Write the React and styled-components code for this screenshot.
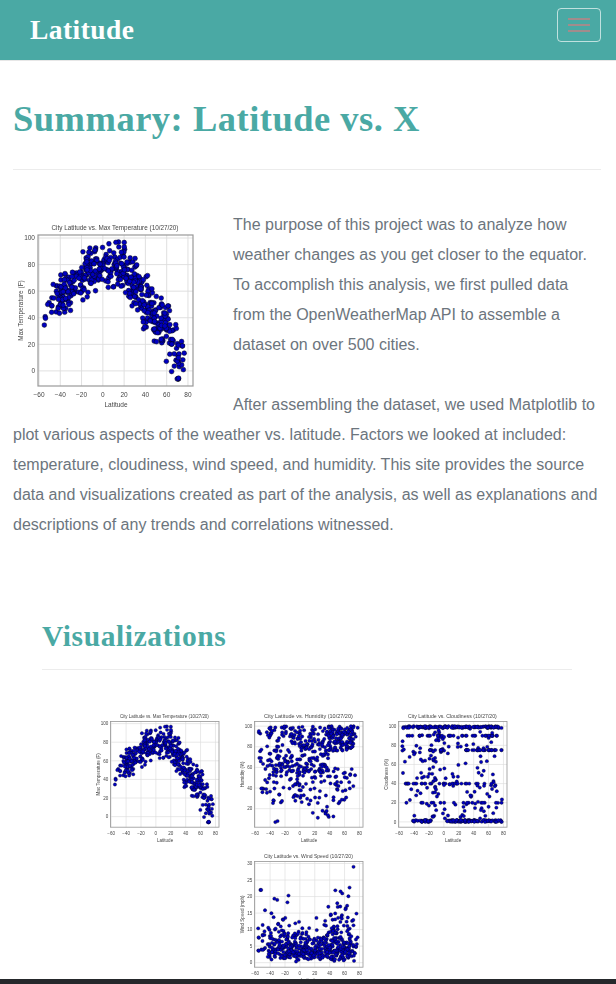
import React from 'react';
import styled, { createGlobalStyle } from 'styled-components';

const Global = createGlobalStyle`
  html, body { margin: 0; padding: 0; height: 984px; overflow: hidden; background: #fff; }
  body { font-family: "Liberation Sans", Arial, sans-serif; }
`;
const TEAL = '#4aa9a4';
const HEAD = '"Liberation Serif", Georgia, serif';

const Navbar = styled.header`
  height: 60px; background: ${TEAL}; border-bottom: 1px solid #e7e7e7;
  display: flex; align-items: flex-start; justify-content: space-between;
  padding: 0 15px 0 30px;
`;
const Brand = styled.a`
  font: bold 27.5px/60px ${HEAD}; color: #fff; letter-spacing: 0.45px;
`;
const Toggler = styled.button`
  width: 44px; height: 34px; margin-top: 8px; padding: 0; background: transparent;
  border: 1px solid rgba(255,255,255,.65); border-radius: 4px;
  display: flex; flex-direction: column; align-items: center; justify-content: center; gap: 4px;
`;
const Bar = styled.span`
  display: block; width: 22px; height: 2px; background: #a28c8c;
`;
const Main = styled.main`
  padding: 0 15px 0 13px;
`;
const Title = styled.h1`
  margin: 0; padding-top: 37px; height: 71px; color: ${TEAL};
  font: bold 36.5px/42px ${HEAD}; letter-spacing: 0.5px;
`;
const Rule = styled.hr`
  margin: 0; border: 0; border-top: 1px solid #ececec;
`;
const Summary = styled.section`
  margin-top: 40px; height: 400px;
`;
const FloatChart = styled.div`
  float: left; width: 200px; height: 200px; margin-right: 20px;
`;
const Body = styled.p`
  margin: 0; color: #6c757d; font-size: 16px; line-height: 30px;
`;
const Viz = styled.section`
  padding: 0 29px;
`;
const Heading = styled.h2`
  margin: 0; padding-top: 7px; height: 52px; color: ${TEAL};
  font: bold 29.5px/38px ${HEAD}; letter-spacing: 0.6px;
`;
const Gallery = styled.div`
  margin-top: 34px; display: flex; flex-wrap: wrap; justify-content: center; column-gap: 4px;
  width: 428px; margin-left: auto; margin-right: auto;
`;
const ChartSvg = styled.svg`
  display: block; width: ${p => p.$size}px; height: ${p => p.$size}px;
  filter: blur(${p => p.$blur}px);
`;
const ChartText = styled.text`
  font-family: "Liberation Sans", Arial, sans-serif; fill: #444;
`;
const Footer = styled.footer`
  position: fixed; left: 0; right: 0; bottom: 0; height: 5px; background: #25282b;
`;

function rng(seed) {
  let a = seed;
  return () => {
    a = (a + 0x6d2b79f5) | 0;
    let t = Math.imul(a ^ (a >>> 15), 1 | a);
    t = (t + Math.imul(t ^ (t >>> 7), 61 | t)) ^ t;
    return ((t ^ (t >>> 14)) >>> 0) / 4294967296;
  };
}
const lerp = (pts, x) => {
  for (let i = 0; i < pts.length - 1; i++) {
    if (x <= pts[i + 1][0]) {
      const [a, b] = pts[i], [c, d] = pts[i + 1];
      return b + ((x - a) / (c - a)) * (d - b);
    }
  }
  return pts[pts.length - 1][1];
};
const lats = (r, n) => Array.from({ length: n }, () => {
  const u = r();
  if (u < 0.04) return -56 + r() * 14;
  if (u < 0.36) return -42 + r() * 42;
  if (u < 0.58) return r() * 30;
  if (u < 0.985) return 30 + r() * 42;
  return 72 + r() * 6;
});
const gauss = r => (r() + r() + r() - 1.5) / 0.5;

const tempCurve = [[-56, 44], [-42, 55], [-30, 62], [-20, 72], [-13, 78], [0, 78], [20, 77], [30, 66], [40, 50], [50, 37], [60, 34], [65, 20], [72, 6], [80, 24]];
const datasets = {
  temp: {
    title: 'City Latitude vs. Max Temperature (10/27/20)', ylabel: 'Max Temperature (F)',
    ticks: [0, 20, 40, 60, 80, 100], top: 0.02, bottom: 0.9, hi: 100,
    gen: r => lats(r, 480).map(l => {
      const spread = l > 35 && l < 72 ? 10.5 : 8;
      return [l, Math.max(-6, Math.min(97, lerp(tempCurve, l) + gauss(r) * spread))];
    }),
  },
  hum: {
    title: 'City Latitude vs. Humidity (10/27/20)', ylabel: 'Humidity (%)',
    ticks: [20, 40, 60, 80, 100], top: 0.044, bottom: 1.02, hi: 100,
    gen: r => lats(r, 500).map(l => {
      const u = r();
      if (l > 38 && u < 0.72) return [l, 76 + r() * 24];
      if (l < -40) return [l, 35 + r() * 65];
      if (u < 0.74) return [l, 55 + r() * 45];
      if (l > 10 && l < 45) return [l, 10 + r() * 50];
      return [l, 25 + r() * 35];
    }).concat([[-33, 7], [-30, 8]]),
  },
  cloud: {
    title: 'City Latitude vs. Cloudiness (10/27/20)', ylabel: 'Cloudiness (%)',
    ticks: [0, 20, 40, 60, 80, 100], top: 0.044, bottom: 0.95, hi: 100,
    gen: r => lats(r, 520).map(l => {
      const u = r();
      if (u < 0.22) return [l, 100 - r() * 2];
      if (u < 0.29) return [l, 90];
      if (u < 0.38 && (l > 20 || (l > -22 && l < -2))) return [l, 75];
      if (u < 0.42) return [l, 40];
      if (u < 0.45) return [l, 20];
      if (u < 0.72 && l > -42 && (l < -18 || l > 4)) return [l, r() * 2];
      return [l, r() * 100];
    }),
  },
  wind: {
    title: 'City Latitude vs. Wind Speed (10/27/20)', ylabel: 'Wind Speed (mph)',
    ticks: [0, 5, 10, 15, 20, 25, 30], top: 0.019, bottom: 0.957, hi: 30,
    gen: r => lats(r, 520).map(l => {
      const scale = l > -15 && l < 25 ? 3.4 : 5.4;
      return [l, Math.min(24.5, 0.2 + r() * 3 - Math.log(1 - r() * 0.98) * scale)];
    }).concat([[72, 29], [-53, 22], [-52, 22]]),
  },
};

function Chart({ kind, seed, size, blur }) {
  const d = datasets[kind];
  const pts = React.useMemo(() => d.gen(rng(seed)), [d, seed]);
  const L = 25, R = 180, T = 25, B = 176, H = B - T;
  const x = l => 26 + (l + 60) * 1.064;
  const y = v => T + H * (d.top + (1 - v / d.hi) * (d.bottom - d.top));
  const xt = [-60, -40, -20, 0, 20, 40, 60, 80];
  return (
    <ChartSvg viewBox="0 0 200 200" $size={size} $blur={blur}>
      {xt.map(t => <line key={t} x1={x(t)} x2={x(t)} y1={T} y2={B} stroke="#dcdcdc" strokeWidth="0.9" />)}
      {d.ticks.map(t => <line key={t} x1={L} x2={R} y1={y(t)} y2={y(t)} stroke="#dcdcdc" strokeWidth="0.9" />)}
      <rect x={L} y={T} width={R - L} height={H} fill="none" stroke="#999" strokeWidth="1.2" />
      {pts.map(([a, b], i) => (
        <circle key={i} cx={x(a)} cy={y(b)} r="2.4" fill="#0000c0" stroke="#000" strokeWidth="0.45" />
      ))}
      <ChartText x="102" y="20" fontSize="7" textAnchor="middle" textLength="127" lengthAdjust="spacingAndGlyphs">{d.title}</ChartText>
      {xt.map(t => {
        const s = t < 0 ? `−${-t}` : String(t);
        return <ChartText key={t} x={x(t)} y="187" fontSize="6.5" textAnchor="middle">{s}</ChartText>;
      })}
      {d.ticks.map(t => (
        <ChartText key={t} x="22" y={y(t) + 2.4} fontSize="6.5" textAnchor="end">{t}</ChartText>
      ))}
      <ChartText x="103" y="197" fontSize="6.5" textAnchor="middle">Latitude</ChartText>
      <ChartText x="0" y="0" fontSize="6.5" textAnchor="middle" transform={`translate(9.5 ${T + H / 2}) rotate(-90)`}>{d.ylabel}</ChartText>
    </ChartSvg>
  );
}

export default function App() {
  return (
    <>
      <Global />
      <Navbar>
        <Brand>Latitude</Brand>
        <Toggler aria-label="Toggle navigation"><Bar /><Bar /><Bar /></Toggler>
      </Navbar>
      <Main>
        <Title>Summary: Latitude vs. X</Title>
        <Rule />
        <Summary>
          <FloatChart><Chart kind="temp" seed={11} size={200} blur={0.5} /></FloatChart>
          <Body>
            The purpose of this project was to analyze how weather changes as you get closer to the equator. To accomplish this analysis, we first pulled data from the OpenWeatherMap API to assemble a dataset on over 500 cities.
            <br /><br />
            After assembling the dataset, we used Matplotlib to plot various aspects of the weather vs. latitude. Factors we looked at included: temperature, cloudiness, wind speed, and humidity. This site provides the source data and visualizations created as part of the analysis, as well as explanations and descriptions of any trends and correlations witnessed.
          </Body>
        </Summary>
        <Viz>
          <Heading>Visualizations</Heading>
          <Rule />
          <Gallery>
            <Chart kind="temp" seed={11} size={140} blur={0.65} />
            <Chart kind="hum" seed={23} size={140} blur={0.65} />
            <Chart kind="cloud" seed={37} size={140} blur={0.65} />
            <Chart kind="wind" seed={41} size={140} blur={0.65} />
          </Gallery>
        </Viz>
      </Main>
      <Footer />
    </>
  );
}
